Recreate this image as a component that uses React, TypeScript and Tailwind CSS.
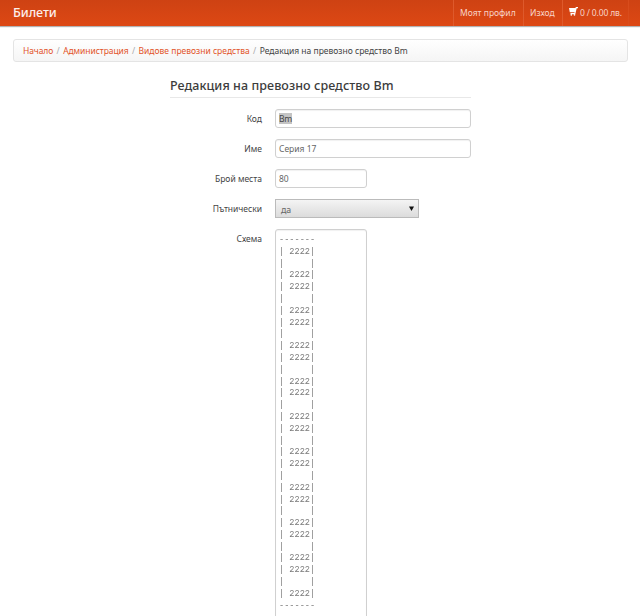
import type { ReactNode } from 'react';

const seats = '| 2222|';
const aisle = '|     |';
const border = '-------';
const scheme = [
  border,
  seats,
  ...Array.from({ length: 9 }, () => [aisle, seats, seats]).flat(),
  aisle,
  seats,
  border,
].join('\n');

const field =
  'block h-[19px] rounded-[3px] border border-[#d0d0d0] bg-white px-[3px] text-[8.5px] leading-[18px] text-[#666] shadow-[inset_0_1px_1px_rgba(0,0,0,0.06)]';

function Row({ label, children }: { label: string; children: ReactNode }) {
  return (
    <div className="mb-[11.1px] flex">
      <div className="mr-[13px] w-[92px] shrink-0 pt-[3px] text-right text-[8.5px] leading-[13px] whitespace-nowrap text-[#444]">
        {label}
      </div>
      {children}
    </div>
  );
}

function Cart() {
  return (
    <svg className="mt-[7px] mr-[2px] h-[9px] w-[9px] shrink-0" viewBox="0 0 18 18" fill="#fff">
      <path d="M18 0h-4.4l-.6 2H0l1.6 8.5h9.6l-.4 1.6H3v2.2h9.5L15.4 2.4H18z" />
      <circle cx="4.6" cy="15.6" r="1.7" />
      <circle cx="11" cy="15.6" r="1.7" />
    </svg>
  );
}

export default function App() {
  const item =
    'flex h-[26px] border-l border-[#de5a2c] px-[6px] text-[8.5px] leading-[26px] whitespace-nowrap text-[#f8d3c7]';
  return (
    <div className="h-[616px] w-[640px] overflow-hidden bg-white font-['Noto_Sans','Open_Sans',sans-serif]">
      <header className="flex h-[26px] justify-between bg-linear-to-b from-[#ce4213] to-[#dd4814] pr-[11px] pl-[13px] shadow-[0_1px_1px_rgba(0,0,0,0.3)]">
        <div className="text-[12.5px] leading-[26px] font-medium tracking-[-0.05px] text-[#fdf0ec]">Билети</div>
        <nav className="flex border-r border-[#d84c1c]">
          <a className={`${item} w-[70px]`}>Моят профил</a>
          <a className={`${item} w-[39px]`}>Изход</a>
          <a className={`${item} w-[66px]`}>
            <Cart />
            <span className="tracking-[-0.15px]">0 / 0.00 лв.</span>
          </a>
        </nav>
      </header>

      <div className="mt-[13px] mr-[12px] ml-[13px] flex h-[23px] gap-[3.4px] rounded-[3px] border border-[#e4e4e4] bg-linear-to-b from-white to-[#f5f5f5] pl-[9px] text-[8.5px] leading-[22px] whitespace-nowrap text-[#e2542a]">
        <a className="tracking-[-0.1px]">Начало</a>
        <span className="text-[#aaa]">/</span>
        <a className="tracking-[-0.07px]">Администрация</a>
        <span className="text-[#aaa]">/</span>
        <a>Видове превозни средства</a>
        <span className="text-[#aaa]">/</span>
        <span className="text-[#444]">Редакция на превозно средство Bm</span>
      </div>

      <main className="mt-[11px] ml-[170px] w-[301px]">
        <h1 className="mb-[11px] h-[25px] border-b border-[#e8e8e8] text-[12.5px] leading-[26px] font-medium tracking-[0.07px] whitespace-nowrap text-[#3c3c3c]">
          Редакция на превозно средство Bm
        </h1>
        <Row label="Код">
          <div className={`${field} w-[196px]`}>
            <span className="inline-block h-[11px] bg-[#c4c4c4] leading-[11px] tracking-[-0.4px] text-[#444]">Bm</span>
          </div>
        </Row>
        <Row label="Име">
          <div className={`${field} w-[196px]`}>Серия 17</div>
        </Row>
        <Row label="Брой места">
          <div className={`${field} w-[92px]`}>80</div>
        </Row>
        <Row label="Пътнически">
          <div className="flex h-[19px] w-[144px] justify-between border border-[#bbb] bg-linear-to-b from-[#f4f4f4] to-[#dcdcdc] pr-[4px] pl-[5px] text-[8.8px] leading-[20px] text-[#666]">
            <span>да</span>
            <svg className="mt-[6px] h-[5px] w-[5px]" viewBox="0 0 5 5">
              <path d="M0 .5h5L2.5 5z" fill="#111" />
            </svg>
          </div>
        </Row>
        <Row label="Схема">
          <div className="h-[400px] w-[92px] rounded-[3px] border border-[#d0d0d0] pt-[4.6px] pl-[3px] shadow-[inset_0_1px_1px_rgba(0,0,0,0.06)]">
            <pre className="font-['Liberation_Mono',monospace] text-[8.6px] leading-[11.79px] text-[#777] opacity-99 will-change-[opacity]">
              {scheme}
            </pre>
          </div>
        </Row>
      </main>
    </div>
  );
}
